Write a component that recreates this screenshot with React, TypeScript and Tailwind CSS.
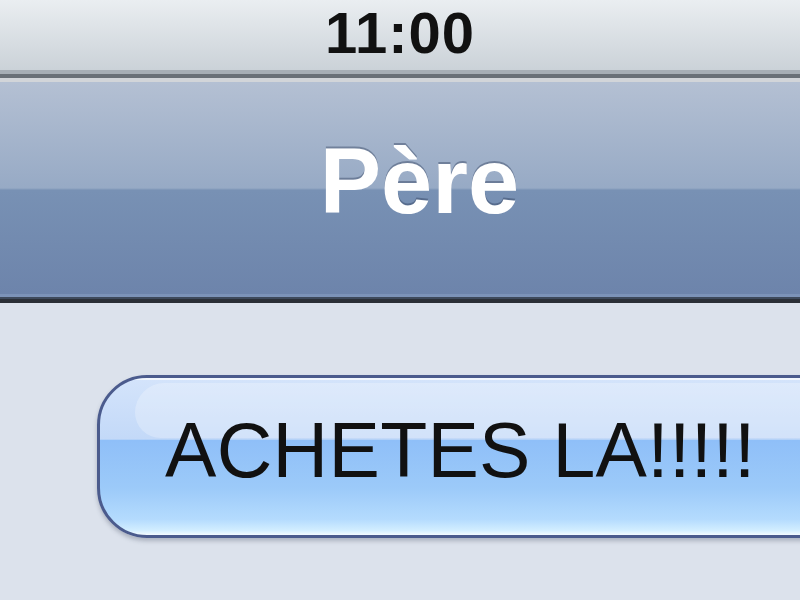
const sans = { fontFamily: '"Liberation Sans", Arial, sans-serif' };

function StatusBar() {
  return (
    <div>
      <div className="flex h-[70px] items-start justify-center bg-gradient-to-b from-[#eaeef1] to-[#cbd2d8]">
        <span className="mt-[4px] text-[58px] font-bold leading-[58px] tracking-[1px] text-[#111]">11:00</span>
      </div>
      <div className="h-[4px] bg-[#a7aeb5]" />
      <div className="h-[4px] bg-[#6a7077]" />
      <div className="h-[4px] bg-[#d2d5d9]" />
    </div>
  );
}

function NavBar({ title }: { title: string }) {
  return (
    <div>
      <div className="flex h-[212px] items-start justify-center pl-[39px] pt-[53px] bg-[linear-gradient(to_bottom,#b4c0d3_0%,#97aac5_50%,#7891b4_51%,#6d84ab_100%)]">
        <h1 className="text-[92px] font-bold leading-[92px] text-white [text-shadow:0_-2px_0_rgba(40,55,85,0.4)]">
          {title}
        </h1>
      </div>
      <div className="h-[3px] bg-[#7c93b8]" />
      <div className="h-[2px] bg-[#3e4a5c]" />
      <div className="h-[4px] bg-[#2b2f37]" />
    </div>
  );
}

function Bubble({ text }: { text: string }) {
  return (
    <div className="relative h-[163px] w-[760px] overflow-hidden rounded-[50px] border-[3px] border-[#4b5b8d] bg-[linear-gradient(to_bottom,#d4e4fb_0%,#c3d9f8_39%,#8fbff8_39.6%,#9ccaf9_70%,#b4dbfe_90%,#d2eeff_97%,#f4fbff_100%)] shadow-[0_3px_4px_rgba(80,90,110,0.35)]">
      <div className="absolute left-0 right-0 top-0 h-[2px] bg-white/70" />
      <div className="absolute left-[35px] right-0 top-[5px] h-[55px] rounded-tl-[30px] rounded-bl-[26px] bg-white/25" />
      <div className="relative flex h-full items-start pl-[65px] pt-[34px]">
        <span className="text-[77px] leading-[77px] tracking-[0.3px] text-[#111]">{text}</span>
      </div>
    </div>
  );
}

export default function App() {
  return (
    <div className="h-[600px] w-[800px] overflow-hidden bg-[#dce2ec]" style={sans}>
      <StatusBar />
      <NavBar title="Père" />
      <div className="pl-[97px] pt-[72px]">
        <Bubble text="ACHETES LA!!!!!" />
      </div>
    </div>
  );
}
